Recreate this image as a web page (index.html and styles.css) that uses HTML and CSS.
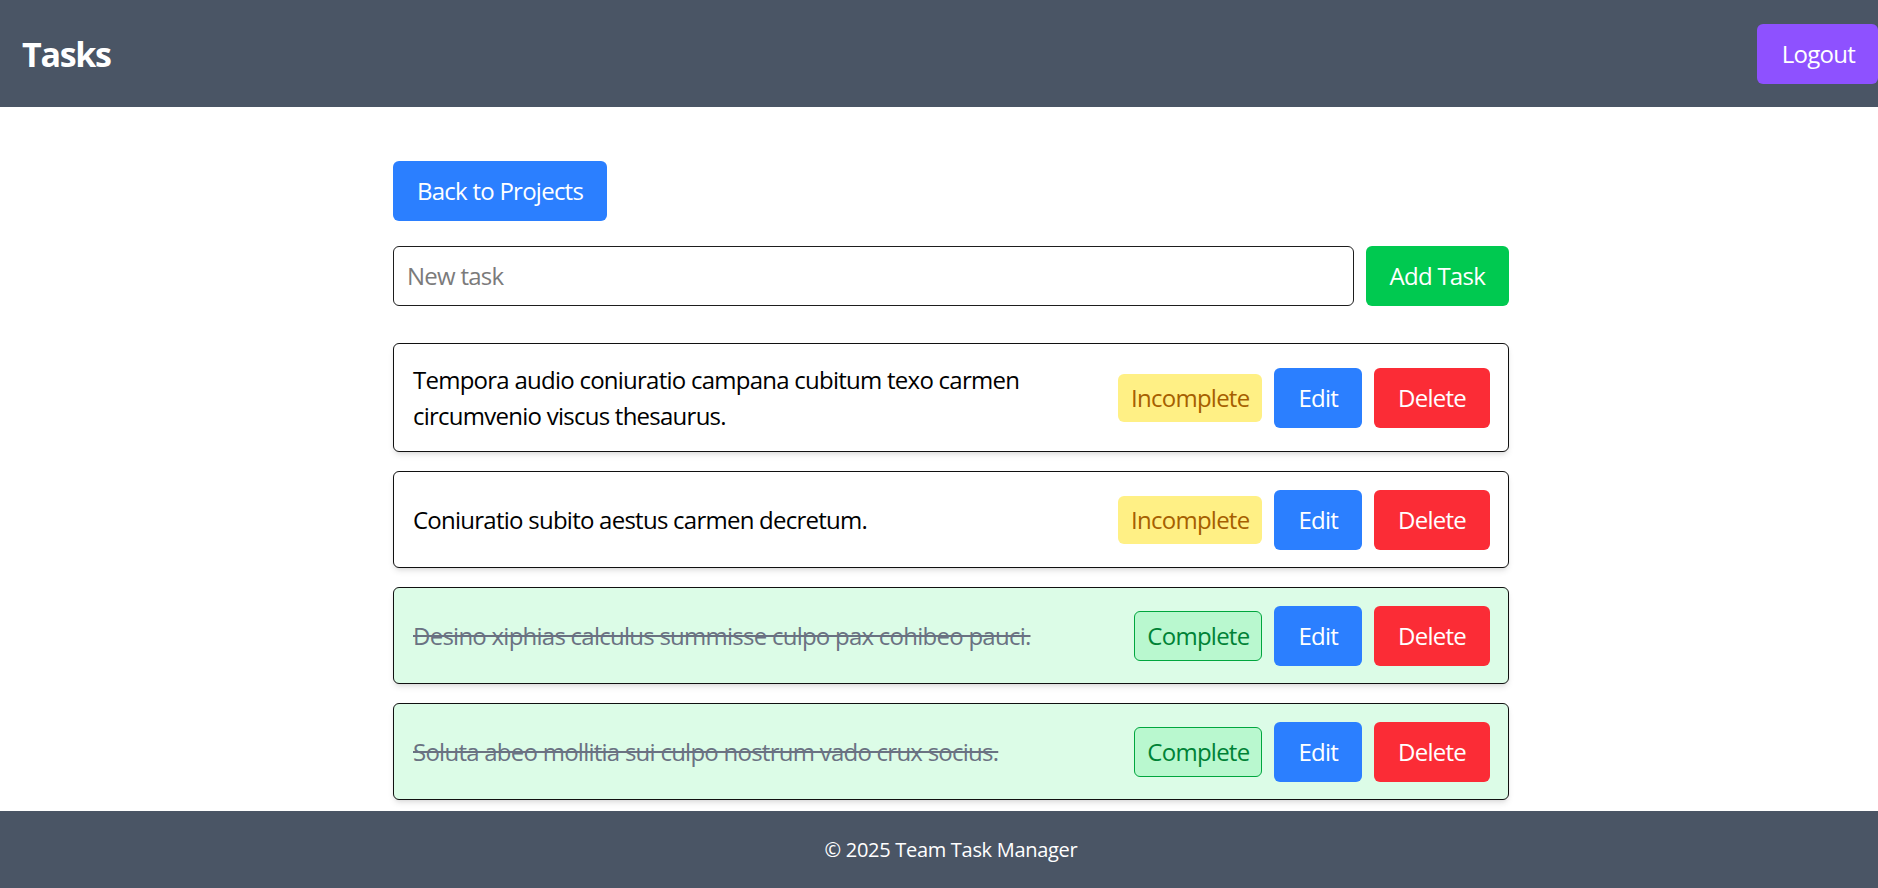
FILE: index.html
```html
<!DOCTYPE html>
<html lang="en">
<head>
<meta charset="utf-8">
<title>Tasks</title>
<link rel="stylesheet" href="styles.css">
</head>
<body>
<header class="topbar">
  <h1 class="title">Tasks</h1>
  <button class="btn btn-violet">Logout</button>
</header>
<main class="main">
  <div class="container">
    <button class="btn btn-blue back">Back to Projects</button>
    <form class="new-task">
      <input class="task-input" type="text" placeholder="New task">
      <button type="button" class="btn btn-green">Add Task</button>
    </form>
    <ul class="task-list">
      <li class="task">
        <span class="task-text">Tempora audio coniuratio campana cubitum texo carmen circumvenio viscus thesaurus.</span>
        <div class="actions">
          <span class="badge badge-incomplete">Incomplete</span>
          <button class="btn btn-blue">Edit</button>
          <button class="btn btn-red">Delete</button>
        </div>
      </li>
      <li class="task">
        <span class="task-text">Coniuratio subito aestus carmen decretum.</span>
        <div class="actions">
          <span class="badge badge-incomplete">Incomplete</span>
          <button class="btn btn-blue">Edit</button>
          <button class="btn btn-red">Delete</button>
        </div>
      </li>
      <li class="task task-done">
        <span class="task-text">Desino xiphias calculus summisse culpo pax cohibeo pauci.</span>
        <div class="actions">
          <span class="badge badge-complete">Complete</span>
          <button class="btn btn-blue">Edit</button>
          <button class="btn btn-red">Delete</button>
        </div>
      </li>
      <li class="task task-done">
        <span class="task-text">Soluta abeo mollitia sui culpo nostrum vado crux socius.</span>
        <div class="actions">
          <span class="badge badge-complete">Complete</span>
          <button class="btn btn-blue">Edit</button>
          <button class="btn btn-red">Delete</button>
        </div>
      </li>
    </ul>
  </div>
</main>
<footer class="footer">© 2025 Team Task Manager</footer>
</body>
</html>
```
FILE: styles.css
```css
* { box-sizing: border-box; }
html, body { margin: 0; padding: 0; }
body {
  font-family: "Open Sans", "Noto Sans", sans-serif;
  font-size: 24px;
  line-height: 36px;
  letter-spacing: -0.75px;
  color: #000;
  background: #fff;
  min-height: 100vh;
  display: flex;
  flex-direction: column;
}
.topbar {
  background: #4a5565;
  color: #fff;
  display: flex;
  align-items: center;
  justify-content: space-between;
  padding: 24px 0 23px 22px;
}
.title {
  margin: 0;
  font-size: 34px;
  line-height: 40px;
  font-weight: 700;
  letter-spacing: -1.3px;
}
.btn {
  font-family: inherit;
  font-size: 24px;
  line-height: 36px;
  letter-spacing: -0.75px;
  border: 0;
  border-radius: 6px;
  padding: 12px 24px;
  color: #fff;
  cursor: pointer;
}
.btn-violet { background: #8e51ff; padding: 12px 23px 12px 25px; }
.btn-blue { background: #2b7fff; }
.btn-green { background: #00c950; }
.btn-red { background: #fb2c36; }
.main {
  flex: 1;
  padding-top: 54px;
}
.container {
  width: 1116px;
  margin-left: calc(50% - 546px);
  display: flex;
  flex-direction: column;
  align-items: flex-start;
}
.back { margin-bottom: 25px; }
.new-task {
  display: flex;
  gap: 12px;
  width: 100%;
  margin: 0 0 37px 0;
}
.task-input {
  flex: 1;
  font-family: inherit;
  font-size: 24px;
  line-height: 36px;
  letter-spacing: -0.75px;
  padding: 11px 13px;
  border: 1px solid #1e1e1e;
  border-radius: 6px;
  color: #000;
}
.task-input::placeholder { color: #7b7b7b; }
.task-list {
  list-style: none;
  margin: 0;
  padding: 0;
  width: 100%;
  display: flex;
  flex-direction: column;
  gap: 19px;
}
.task {
  display: flex;
  align-items: center;
  justify-content: space-between;
  gap: 24px;
  border: 1px solid #111;
  border-radius: 6px;
  padding: 17.5px 18px 17.5px 19px;
  background: #fff;
  box-shadow: 0 4px 6px -1px rgba(0,0,0,0.1), 0 2px 4px -2px rgba(0,0,0,0.1);
}
.task-text { max-width: 690px; }
.task-done { background: #dcfce7; }
.task-done .task-text { color: #6a7282; text-decoration: line-through; }
.actions {
  display: flex;
  align-items: center;
  gap: 12px;
  flex-shrink: 0;
}
.badge {
  border-radius: 6px;
  padding: 6px 13px;
}
.badge-incomplete { background: #fff085; color: #a65f00; }
.badge-complete {
  background: #b9f8cf;
  color: #008236;
  border: 1px solid #00a63e;
  padding: 6px 12px;
}
.footer {
  background: #4a5565;
  color: #fff;
  text-align: center;
  font-size: 20px;
  line-height: 29px;
  padding: 24px 0 24px 24px;
  letter-spacing: -0.3px;
}
```
